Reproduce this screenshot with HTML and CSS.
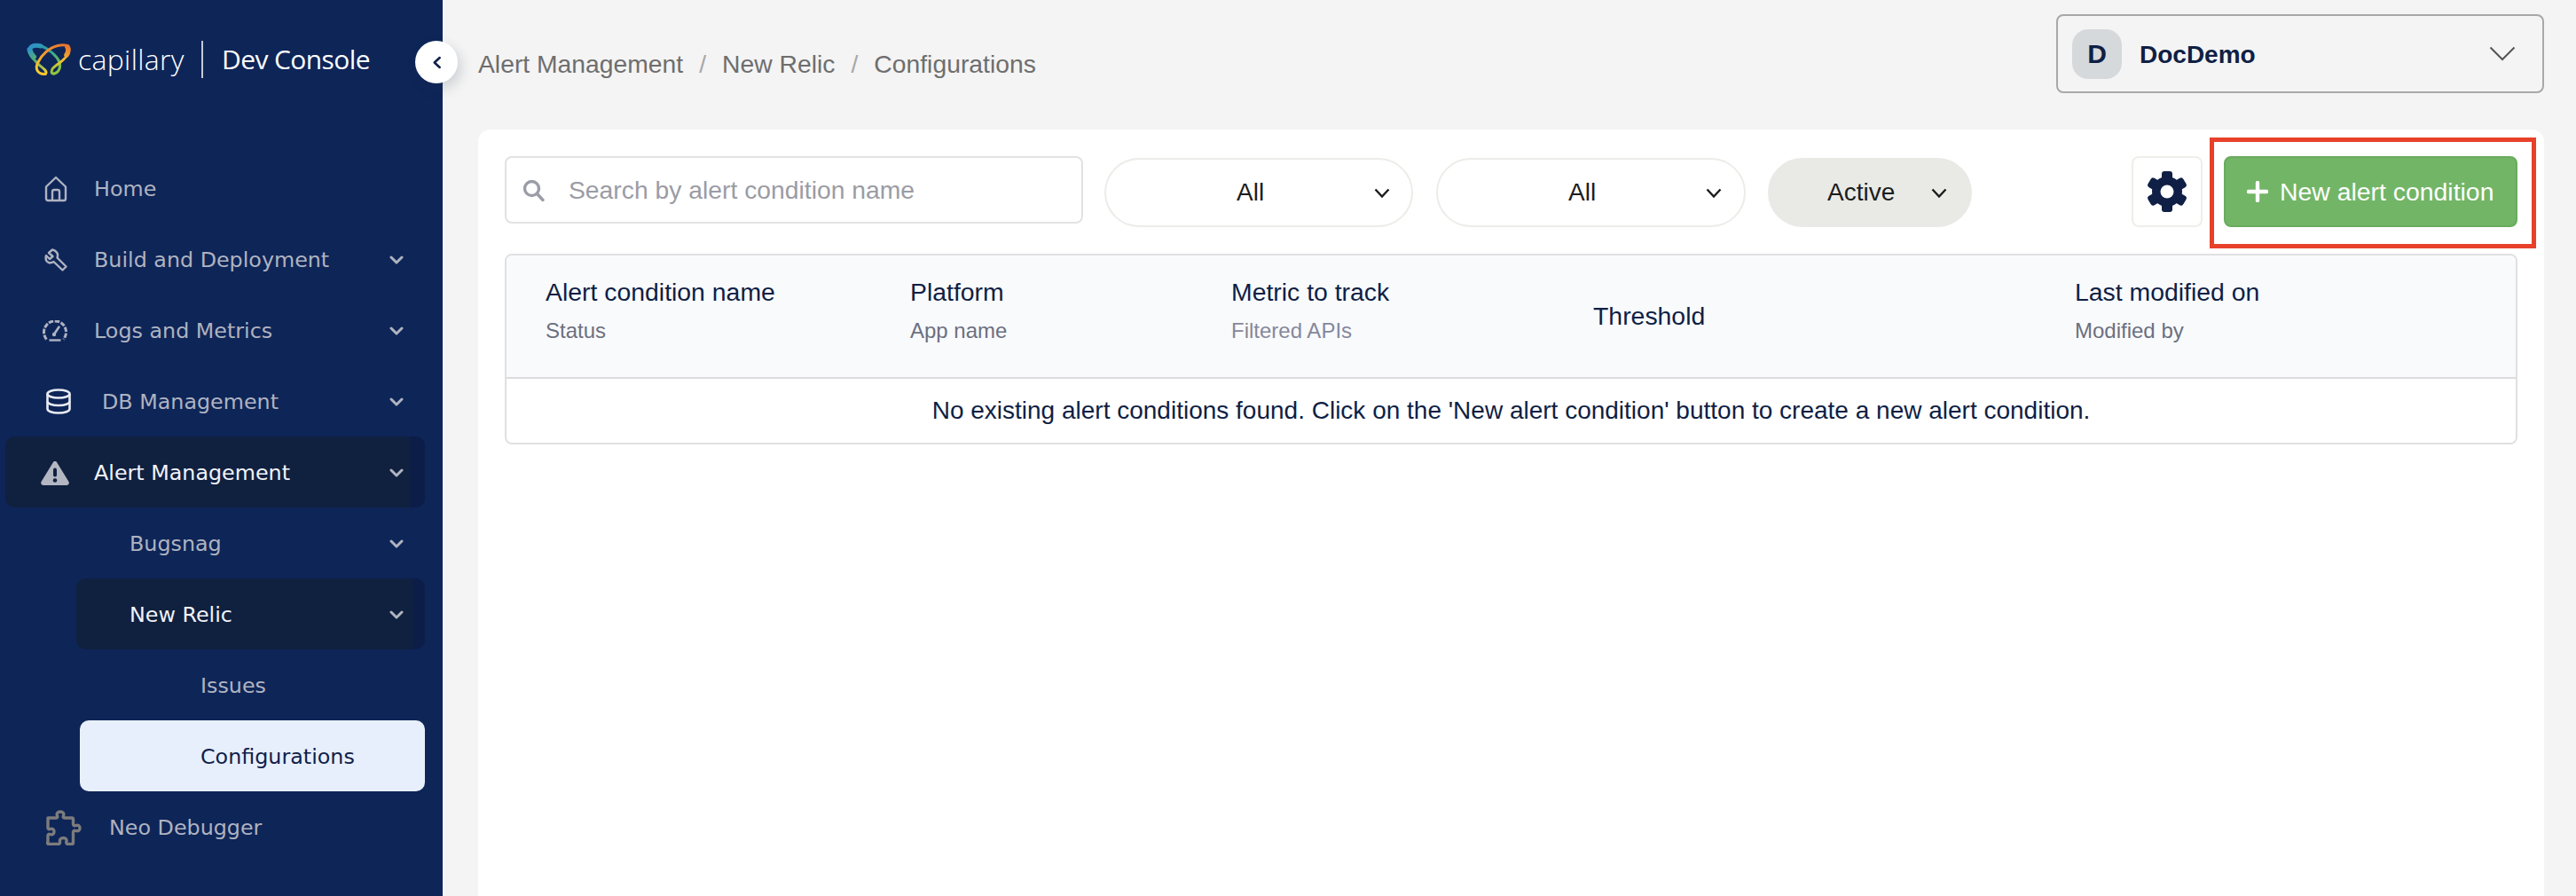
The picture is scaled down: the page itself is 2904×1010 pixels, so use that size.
FILE: index.html
```html
<!DOCTYPE html>
<html lang="en">
<head>
<meta charset="utf-8">
<title>Dev Console</title>
<link rel="stylesheet" href="styles.css">
</head>
<body>
<div class="app">
  <aside class="sidebar">
    <div class="brand">
      <svg class="logo" viewBox="0 0 50 38" fill="none" stroke-linecap="round">
        <defs>
          <linearGradient id="lg1" gradientUnits="userSpaceOnUse" x1="14" y1="36" x2="44" y2="2"><stop offset="0" stop-color="#f6d02e"/><stop offset=".45" stop-color="#f29a2e"/><stop offset="1" stop-color="#e8732e"/></linearGradient>
          <linearGradient id="lg2" gradientUnits="userSpaceOnUse" x1="48" y1="4" x2="30" y2="36"><stop offset="0" stop-color="#e8732e"/><stop offset=".5" stop-color="#f2c22e"/><stop offset="1" stop-color="#8cc63f"/></linearGradient>
          <linearGradient id="lg3" gradientUnits="userSpaceOnUse" x1="34" y1="35" x2="4" y2="3"><stop offset="0" stop-color="#8cc63f"/><stop offset=".5" stop-color="#2fa890"/><stop offset="1" stop-color="#2e8fcb"/></linearGradient>
          <linearGradient id="lg4" gradientUnits="userSpaceOnUse" x1="2" y1="6" x2="20" y2="36"><stop offset="0" stop-color="#2e8fcb"/><stop offset=".45" stop-color="#52b26a"/><stop offset="1" stop-color="#f6d02e"/></linearGradient>
        </defs>
        <path stroke="url(#lg4)" stroke-width="3" d="M3 9C3 15 9 20 15 26C20 30 24 33 21 35.500"/>
        <path stroke="url(#lg4)" stroke-width="6" d="M3.500 8C4 11 6 14 8 16"/>
        <path stroke="url(#lg3)" stroke-width="3" d="M31 35C36 34 39 28 37 22C34 15 25 7 16 3.500C9 1.500 3 3 3 8"/>
        <path stroke="url(#lg3)" stroke-width="5" d="M6 4.500C8 3.500 12 3 16 4"/>
        <path stroke="url(#lg1)" stroke-width="3" d="M21 35.500C12 36 9 29 13 22C17 14 25 6 35 3.500C39 2.500 43 2.500 46 3.500"/>
        <path stroke="url(#lg2)" stroke-width="3" d="M46 3.500C49 5 48.500 11 46 14C42 20 37 23 33 26C28 29 26 36 31 35"/>
        <path stroke="url(#lg2)" stroke-width="5.500" d="M46 5C47.500 7 47 11 45 14"/>
      </svg>
      <span class="brand-name">capillary</span>
      <span class="brand-divider"></span>
      <span class="brand-product">Dev Console</span>
    </div>
    <button class="collapse" aria-label="Collapse">
      <svg viewBox="0 0 12 16" width="11" height="15" fill="none" stroke="#10214a" stroke-width="2.800" stroke-linecap="round" stroke-linejoin="round"><path d="M9.500 2 3 8l6.500 6"/></svg>
    </button>
    <nav class="nav">
      <a class="row">
        <span class="ico"><svg width="26" height="30" viewBox="0 0 26 30" fill="none" stroke="#aeb3c0" stroke-width="2.400" stroke-linejoin="round"><path d="M2 12.500 13 2l11 10.500V26a2 2 0 0 1-2 2H4a2 2 0 0 1-2-2z"/><path d="M9 28V18a2 2 0 0 1 2-2h4a2 2 0 0 1 2 2v10"/></svg></span>
        <span class="label">Home</span>
      </a>
      <a class="row">
        <span class="ico"><svg width="26" height="26" viewBox="0 0 26 26" fill="none" stroke="#aeb3c0" stroke-width="2.400" stroke-linejoin="round"><path d="M9 1.500 5 5l4.500 4L6 12 2 8c-1 4 0 7 3 8 2 .6 4 0 5.500-1L20.500 24.500l4-4L14.500 10.500C15.500 8 15 5 12.500 3 11.500 2.200 10 1.700 9 1.500z"/></svg></span>
        <span class="label">Build and Deployment</span>
        <svg class="chev" viewBox="0 0 16 10"><path d="M2 2l6 6 6-6"/></svg>
      </a>
      <a class="row">
        <span class="ico ico-gauge"><svg width="28" height="24" viewBox="0 0 28 24" fill="none" stroke="#aeb3c0" stroke-width="3"><path stroke-dasharray="5.500 1.500" d="M4.500 21.500A12.500 12.500 0 1 1 23.500 21.500"/><path d="M13.500 15 18.500 7.500" stroke-width="2.600" stroke-linecap="round"/><circle cx="13" cy="16" r="2.200" fill="#aeb3c0" stroke="none"/><path d="M7.500 22.500h13" stroke-width="2.400"/></svg></span>
        <span class="label">Logs and Metrics</span>
        <svg class="chev" viewBox="0 0 16 10"><path d="M2 2l6 6 6-6"/></svg>
      </a>
      <a class="row">
        <span class="ico ico-db"><svg width="28" height="29" viewBox="0 0 28 29" fill="none" stroke="#e8ebf2" stroke-width="2.600"><ellipse cx="14" cy="6" rx="12.500" ry="4.500"/><path d="M1.500 6v17c0 2.500 5.500 4.500 12.500 4.500s12.500-2 12.500-4.500V6"/><path d="M1.500 14.500c0 2.500 5.500 4.500 12.500 4.500s12.500-2 12.500-4.500"/></svg></span>
        <span class="label label-db">DB Management</span>
        <svg class="chev" viewBox="0 0 16 10"><path d="M2 2l6 6 6-6"/></svg>
      </a>
      <a class="row row-active">
        <span class="ico ico-alert"><svg width="32" height="28" viewBox="0 0 32 28"><path fill="#b3b7c2" d="M16 1c1 0 1.800.5 2.300 1.400L31.500 24c1 1.800-.2 4-2.300 4H2.800C.7 28-.5 25.800.5 24L13.700 2.400C14.200 1.500 15 1 16 1z"/><rect x="14" y="8.500" width="4" height="10" rx="2" fill="#10203f"/><circle cx="16" cy="22.500" r="2.300" fill="#10203f"/></svg></span>
        <span class="label">Alert Management</span>
        <svg class="chev" viewBox="0 0 16 10"><path d="M2 2l6 6 6-6"/></svg>
      </a>
      <a class="row row-sub">
        <span class="label">Bugsnag</span>
        <svg class="chev" viewBox="0 0 16 10"><path d="M2 2l6 6 6-6"/></svg>
      </a>
      <a class="row row-sub row-active">
        <span class="label">New Relic</span>
        <svg class="chev" viewBox="0 0 16 10"><path d="M2 2l6 6 6-6"/></svg>
      </a>
      <a class="row row-leaf"><span class="label">Issues</span></a>
      <a class="row row-leaf row-current"><span class="label">Configurations</span></a>
      <a class="row row-neo">
        <span class="ico ico-neo"><svg width="40" height="40" viewBox="0 0 40 40" fill="none" stroke="#7c7c7c" stroke-width="3.400" stroke-linejoin="round"><path d="M2 9h9c2 0 2-1 1.500-2.500C11.500 4 13 2 16 2s4.500 2 3.500 4.500C19 8 19 9 21 9h8a1.500 1.500 0 0 1 1.500 1.500V16c0 2 1.500 2 3 1.500 2.500-1 4.500.5 4.500 3s-2 4-4.500 3c-1.500-.5-3-.5-3 1.500v12a1.500 1.500 0 0 1-1.500 1.500H25c-2 0-2.500-1-2-3 .5-2.500-1-4-3.500-4s-4.500 1.500-4 4c.4 2-.5 3-2 3H3.500A1.500 1.500 0 0 1 2 36v-7c0-1.500 1-2 2.500-1.500 2.500 1 4.500-.5 4.500-3s-2-4-4.500-3C3 22 2 21.500 2 20z"/></svg></span>
        <span class="label">Neo Debugger</span>
      </a>
    </nav>
  </aside>
  <main class="main">
    <header class="topbar">
      <ol class="crumbs">
        <li>Alert Management</li>
        <li class="sep">/</li>
        <li>New Relic</li>
        <li class="sep">/</li>
        <li>Configurations</li>
      </ol>
      <div class="org">
        <span class="avatar">D</span>
        <span class="org-name">DocDemo</span>
        <svg class="org-chev" viewBox="0 0 30 17" fill="none" stroke="#555" stroke-width="2"><path d="M1.500 1.500 15 15 28.500 1.500"/></svg>
      </div>
    </header>
    <section class="card">
      <div class="toolbar">
        <label class="search">
          <svg width="25" height="25" viewBox="0 0 25 25" fill="none" stroke="#9a9da8" stroke-width="3.400"><circle cx="10.500" cy="10.500" r="8"/><path d="m16.500 16.500 6.500 7" stroke-linecap="round"/></svg>
          <span class="placeholder">Search by alert condition name</span>
        </label>
        <div class="pill pill-a"><span>All</span><svg class="pill-chev" viewBox="0 0 18 11"><path d="M1.500 1.500 9 9.500l7.500-8"/></svg></div>
        <div class="pill pill-b"><span>All</span><svg class="pill-chev" viewBox="0 0 18 11"><path d="M1.500 1.500 9 9.500l7.500-8"/></svg></div>
        <div class="pill pill-active"><span>Active</span><svg class="pill-chev" viewBox="0 0 18 11"><path d="M1.500 1.500 9 9.500l7.500-8"/></svg></div>
        <button class="gear" aria-label="Settings">
          <svg width="48" height="48" viewBox="0 0 48 48"><g fill="#0f1f45"><rect x="18" y="1" width="12" height="46" rx="3"/><rect x="18" y="1" width="12" height="46" rx="3" transform="rotate(60 24 24)"/><rect x="18" y="1" width="12" height="46" rx="3" transform="rotate(120 24 24)"/><circle cx="24" cy="24" r="17"/></g><circle cx="24" cy="24" r="7.500" fill="#fff"/></svg>
        </button>
        <div class="cta-wrap">
          <button class="cta"><svg width="24" height="24" viewBox="0 0 24 24" stroke="#fff" stroke-width="4.400" stroke-linecap="round"><path d="M12 2v20M2 12h20"/></svg><span>New alert condition</span></button>
          <span class="highlight"></span>
        </div>
      </div>
      <div class="table">
        <div class="thead">
          <div class="th"><div class="th-main">Alert condition name</div><div class="th-sub">Status</div></div>
          <div class="th"><div class="th-main">Platform</div><div class="th-sub">App name</div></div>
          <div class="th"><div class="th-main">Metric to track</div><div class="th-sub th-sub-light">Filtered APIs</div></div>
          <div class="th"><div class="th-main">Threshold</div></div>
          <div class="th"><div class="th-main">Last modified on</div><div class="th-sub">Modified by</div></div>
        </div>
        <div class="empty">No existing alert conditions found. Click on the 'New alert condition' button to create a new alert condition.</div>
      </div>
    </section>
  </main>
</div>
</body>
</html>
```
FILE: styles.css
```css
* { box-sizing: border-box; }
html, body { margin: 0; height: 100%; }
body { background: #f4f4f4; font-family: "Liberation Sans", Arial, sans-serif; overflow: hidden; }
.app { display: flex; height: 1010px; }

.sidebar { position: relative; width: 499px; flex: none; background: #0e2558; font-family: "DejaVu Sans", sans-serif; }
.brand { display: flex; align-items: center; height: 172px; padding: 0 0 38px 30px; }
.logo { width: 50px; height: 38px; flex: none; }
.brand-name { margin-left: 8px; font: 300 32px/40px "Open Sans", sans-serif; color: #fff; width: 139px; letter-spacing: .3px; }
.brand-divider { width: 2px; height: 42px; background: #c5cad6; }
.brand-product { margin-left: 21px; font: 400 30px/40px "Open Sans", sans-serif; color: #fff; letter-spacing: -.6px; white-space: nowrap; }
.collapse { position: absolute; left: 468px; top: 46px; width: 48px; height: 48px; padding: 0; border: 0; border-radius: 50%; background: #fff; display: flex; align-items: center; justify-content: center; box-shadow: 4px 6px 14px rgba(40, 50, 80, .18); }

.nav { display: flex; flex-direction: column; }
.row { display: flex; align-items: center; height: 80px; margin: 0 20px 0 6px; padding: 1px 24px 0 0; border-radius: 10px; color: #aeb3c0; font-size: 23.800px; white-space: nowrap; }
.ico { width: 100px; padding-left: 44px; display: flex; justify-content: flex-start; flex: none; }
.ico-gauge { padding-left: 42px; }
.ico-alert { padding-left: 40px; }
.ico-db { width: 109px; padding-left: 46px; }
.ico-neo { width: 117px; padding-left: 46px; }
.label { flex: 1; }
.chev { width: 16px; height: 10px; fill: none; stroke: #b0b4c0; stroke-width: 3; stroke-linecap: round; stroke-linejoin: round; }
.row-active { background: linear-gradient(90deg, #10203f 0, #10203f 96.500%, #0c1e48 96.500%); color: #f0f3fa; }
.row-sub { margin-left: 86px; padding-left: 60px; }
.row-leaf { margin-left: 90px; padding-left: 136px; }
.row-current { background: #e8effc; color: #10214a; }

.main { flex: 1; padding: 0 36px 0 40px; min-width: 0; display: flex; flex-direction: column; }
.topbar { display: flex; justify-content: space-between; align-items: flex-start; height: 146px; padding-top: 16px; }
.crumbs { display: flex; gap: 18px; list-style: none; margin: 0; padding: 38px 0 0; font-size: 28.300px; line-height: 36px; color: #6e6e6e; }
.sep { color: #a8a8a8; }
.org { width: 550px; height: 89px; display: flex; align-items: center; padding: 2px 30px 0 16px; border: 2px solid #a8a8a8; border-radius: 8px; }
.avatar { width: 56px; height: 56px; margin-top: -2px; border-radius: 18px; background: #d5d9dc; color: #0f1f45; display: flex; align-items: center; justify-content: center; font-size: 30px; font-weight: 700; }
.org-name { flex: 1; margin-left: 20px; font-size: 28px; font-weight: 700; color: #0f1f45; }
.org-chev { width: 30px; height: 17px; margin-top: -2px; }

.card { flex: 1; background: #fff; border-radius: 14px 14px 0 0; padding: 30px 30px 0; }
.toolbar { display: flex; align-items: flex-start; height: 80px; margin-bottom: 30px; }
.search { width: 652px; height: 76px; display: flex; align-items: center; gap: 27px; padding: 1px 0 0 18px; border: 2px solid #e2e2e2; border-radius: 8px; }
.placeholder { font-size: 28.300px; color: #9b9ca4; }
.pill { height: 78px; margin-top: 2px; display: flex; align-items: center; justify-content: space-between; border: 2px solid #ecece8; border-radius: 39px; font-size: 28px; color: #1c1c1c; }
.pill-a { width: 348px; margin-left: 24px; padding: 0 24px 0 147px; }
.pill-b { width: 349px; margin-left: 26px; padding: 0 25px 0 147px; }
.pill-active { width: 230px; margin-left: 25px; padding: 0 26px 0 65px; background: #e9eae6; border-color: #e9eae6; }
.pill-chev { width: 18px; height: 11px; fill: none; stroke: #1c1c1c; stroke-width: 2.400; }
.gear { width: 80px; height: 80px; margin-left: auto; padding: 0; display: flex; align-items: center; justify-content: center; background: #fff; border: 2px solid #eeeeea; border-radius: 8px; }
.cta-wrap { position: relative; margin-left: 24px; }
.cta { width: 331px; height: 80px; display: flex; align-items: center; gap: 13px; padding: 0 0 0 24px; background: #72b566; border: 2px solid #69ab5e; border-radius: 8px; color: #fff; font: 28.400px "Liberation Sans", Arial, sans-serif; white-space: nowrap; }
.highlight { position: absolute; top: -21px; right: -21px; bottom: -24px; left: -16px; border: 5px solid #e8412a; pointer-events: none; }

.table { border: 2px solid #e0e0e2; border-radius: 8px; }
.thead { display: grid; grid-template-columns: 411px 362px 408px 543px 1fr; align-items: center; height: 139px; padding: 0 0 2px 44px; background: #f9fafc; border-bottom: 2px solid #dcdce0; border-radius: 6px 6px 0 0; }
.th-main { font-size: 28.400px; line-height: 36px; color: #0f1f45; }
.th-sub { margin: 11px 0 13px; font-size: 24px; line-height: 30px; color: #6b7080; }
.th-sub-light { color: #85889a; }
.empty { height: 72px; display: flex; align-items: center; justify-content: center; font-size: 28px; color: #0f1f45; }
```
